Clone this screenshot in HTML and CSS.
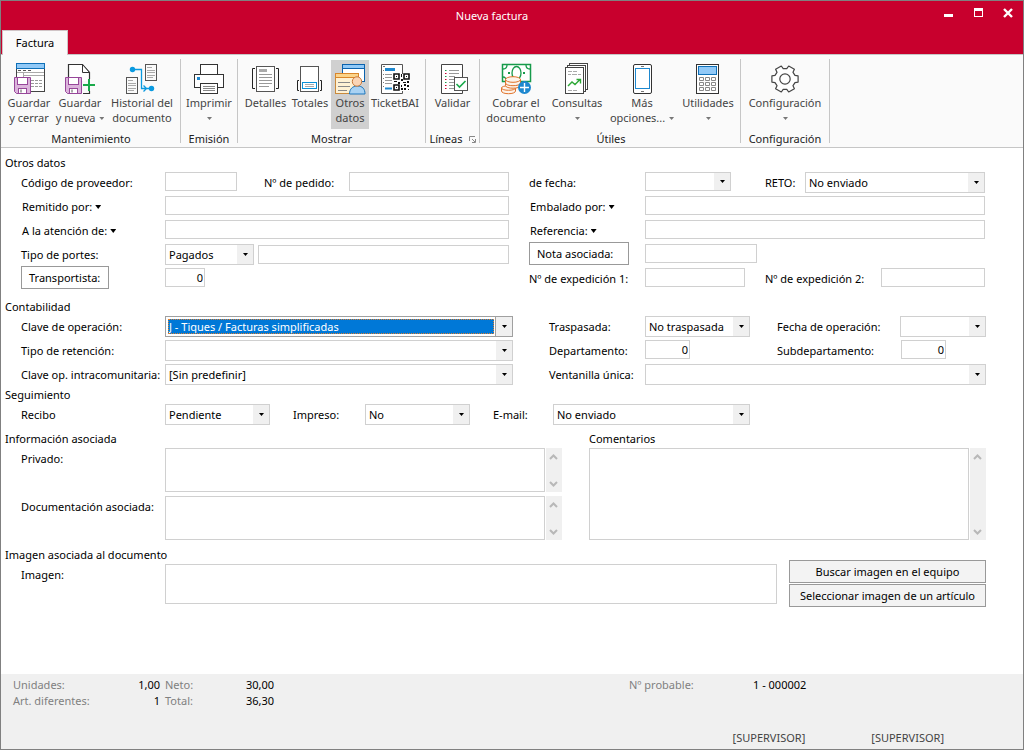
FILE: index.html
```html
<!DOCTYPE html>
<html lang="es">
<head>
<meta charset="utf-8">
<meta name="viewport" content="width=device-width, initial-scale=1">
<title>Nueva factura</title>
<link rel="stylesheet" href="styles.css">
</head>
<body>
<div class="window">
  <header class="titlebar">
    <h1 class="title">Nueva factura</h1>
    <div class="controls">
      <button class="control" type="button" aria-label="Minimizar"><svg width="10" height="10" viewBox="0 0 10 10"><rect x="1" y="6" width="9" height="3" fill="#fff"/></svg></button>
      <button class="control" type="button" aria-label="Maximizar"><svg width="10" height="10" viewBox="0 0 10 10"><path d="M1 0h9v9H1zM2 3v5h7V3z" fill="#fff" fill-rule="evenodd"/></svg></button>
      <button class="control" type="button" aria-label="Cerrar"><svg width="10" height="10" viewBox="0 0 10 10"><path d="M1 1l8 8M9 1l-8 8" stroke="#fff" stroke-width="2.4"/></svg></button>
    </div>
    <nav class="tabs"><button class="tab" type="button">Factura</button></nav>
  </header>

  <div class="ribbon">
    <section class="group">
      <div class="tools">
        <button class="tool w50" type="button">
          <svg class="icon" viewBox="0 0 32 34"><rect x="3.500" y="6.500" width="28" height="23" fill="#fff" stroke="#444"/><rect x="3.500" y="1.500" width="28" height="5" fill="#91c9f7" stroke="#0f70b8"/><path d="M5 8.500h3M10 8.500h3M15 8.500h3" stroke="#555"/><path d="M4 10.500h27M10.500 11v5M11 13.500h20" stroke="#aaa"/><path d="M18 18.500h3M22 18.500h3M26 18.500h3M18 21.500h3M22 21.500h3M26 21.500h3M18 24.500h3M22 24.500h3M26 24.500h3" stroke="#999"/><path d="M1.500 15.500h16v16h-14l-2-2z" fill="#dcb4dc" stroke="#97479a"/><rect x="4.500" y="15.500" width="10" height="7" fill="#fff" stroke="#97479a"/><rect x="5.500" y="26.500" width="8" height="5" fill="#fff" stroke="#97479a"/><path d="M8 27.500v3" stroke="#555"/></svg>
          <span>Guardar</span><span>y cerrar</span>
        </button>
        <button class="tool w52" type="button">
          <svg class="icon" viewBox="0 0 32 34"><path d="M5 3h13v7h7v9h-7v12H5z" fill="#fff"/><path d="M4.500 15V2.500h14l7 8V17M25.500 29v2.500H19" fill="none" stroke="#333" stroke-width="1.200"/><path d="M18.500 2.500v8h7z" fill="#fff" stroke="#333"/><path d="M1.500 15.500h16v16h-14l-2-2z" fill="#dcb4dc" stroke="#97479a"/><rect x="4.500" y="15.500" width="10" height="7" fill="#fff" stroke="#97479a"/><rect x="5.500" y="26.500" width="8" height="5" fill="#fff" stroke="#97479a"/><path d="M8 27.500v3" stroke="#555"/><path d="M25 17v12M19 23h12" stroke="#1aaa4b" stroke-width="2"/></svg>
          <span>Guardar</span><span>y nueva <i class="drop"></i></span>
        </button>
        <button class="tool w72" type="button">
          <svg class="icon" viewBox="0 0 32 34"><g fill="#fafafa" stroke="#555"><rect x="19.500" y="2.500" width="11" height="16"/><rect x=".5" y="15.500" width="11" height="16"/></g><path d="M21 5.500h5M21 8.500h8M21 10.500h8M21 13.500h8M21 15.500h6M2 18.500h5M2 21.500h8M2 23.500h8M2 26.500h8M2 28.500h6" stroke="#aaa"/><path d="M6 7.500h9.500v19h8M17.500 23.500l3 3-3 3" fill="none" stroke="#0a9ae0" stroke-width="1.300"/><circle cx="6.500" cy="7.500" r="2.700" fill="#0a9ae0"/><circle cx="25.500" cy="26.500" r="2.700" fill="#0a9ae0"/></svg>
          <span>Historial del</span><span>documento</span>
        </button>
      </div>
      <h2 class="group-name">Mantenimiento</h2>
    </section>

    <section class="group">
      <div class="tools">
        <button class="tool w56" type="button">
          <svg class="icon" viewBox="0 0 32 34"><g fill="#fff" stroke="#333"><rect x="7.500" y="2.500" width="17" height="11"/><rect x="1.500" y="12.500" width="29" height="13"/><rect x="7.500" y="21.500" width="17" height="10"/></g><path d="M10 24.500h12M10 26.500h12M10 28.500h12" stroke="#888"/><rect x="4" y="15" width="3" height="3" fill="#1e88cf"/></svg>
          <span>Imprimir</span><span><i class="drop"></i></span>
        </button>
      </div>
      <h2 class="group-name">Emisión</h2>
    </section>

    <section class="group">
      <div class="tools">
        <button class="tool w47" type="button">
          <svg class="icon" viewBox="0 0 32 34"><rect x="6.500" y="4.500" width="18" height="25" fill="#fff" stroke="#555"/><path d="M5 6.500H2.500v20H5M26 6.500h2.500v20H26" fill="none" stroke="#222"/><rect x="9" y="7" width="8" height="3" fill="#aaa"/><path d="M9 12.500h13M9 15.500h13M9 18.500h13M9 21.500h13M9 24.500h10" stroke="#999"/></svg>
          <span>Detalles</span>
        </button>
        <button class="tool w42" type="button">
          <svg class="icon" viewBox="0 0 32 34"><rect x="6.500" y="4.500" width="18" height="25" fill="#fff" stroke="#555"/><path d="M5 18.500H3.500v10H5M26 18.500h1.500v10H26" fill="none" stroke="#222"/><rect x="8.500" y="20.500" width="14" height="6" fill="#fff" stroke="#0a90d8"/><path d="M11 22.500h9M11 24.500h9" stroke="#aaa"/></svg>
          <span>Totales</span>
        </button>
        <button class="tool w38 active" type="button" aria-pressed="true">
          <svg class="icon" viewBox="0 0 32 34"><rect x="8.500" y="2.500" width="22" height="17" fill="#fff" stroke="#0b62ad"/><rect x="8.500" y="2.500" width="22" height="4" fill="#91c9f7" stroke="#0b62ad"/><rect x="1.500" y="11.500" width="23" height="20" fill="#fef1d3" stroke="#c98a3c"/><rect x="1.500" y="11.500" width="23" height="4" fill="#fbd48a" stroke="#d9862b"/><path d="M4 20.500h12M4 24.500h12M4 28.500h9" stroke="#888"/><path d="M15.500 32c0-5 3-8 8-8s7.500 3 7.500 8z" fill="#a9d2f3" stroke="#1c77bd"/><circle cx="23" cy="19.500" r="4.700" fill="#fbd5b5" stroke="#c8793a"/></svg>
          <span>Otros</span><span>datos</span>
        </button>
        <button class="tool w52" type="button">
          <svg class="icon" viewBox="0 0 32 34"><path d="M23.500 12V2.500h-21v29h21V29" fill="#fff" stroke="#555"/><path d="M4 4.500h2M4 8.500h1M4 12.500h1M4 16.500h1M4 20.500h1M4 24.500h1" stroke="#777"/><rect x="6" y="6" width="10" height="3" fill="#1e88cf"/><path d="M6 12.500h7M6 15.500h7M6 18.500h7M6 21.500h7" stroke="#999"/><path d="M6 26.500h7" stroke="#1e88cf" stroke-width="2"/><rect x="14" y="12" width="17" height="17" fill="#fff"/><path d="M15 12h5v5h-5zM25 12h5v5h-5zM15 23h5v5h-5z" fill="#fff" stroke="#111" stroke-width="1.600"/><path d="M17 14h1v1h-1zM27 14h1v1h-1zM17 25h1v1h-1zM22 12h1v3h-1zM22 17h2v2h-2zM15 19h3v1h-3zM19 20h2v2h-2zM24 20h3v1h-3zM28 19h2v2h-2zM22 23h1v2h-1zM25 22h2v2h-2zM28 23h2v2h-2zM22 26h2v2h-2zM25 26h2v2h-2zM29 27h1v1h-1z" fill="#111"/></svg>
          <span>TicketBAI</span>
        </button>
      </div>
      <h2 class="group-name">Mostrar</h2>
    </section>

    <section class="group">
      <div class="tools">
        <button class="tool w53" type="button">
          <svg class="icon" viewBox="0 0 32 34"><path d="M25.500 15V2.500h-21v29h21V29" fill="#fff" stroke="#444"/><path d="M12 8.500h10M12 11.500h10M12 14.500h6M12 17.500h5M12 20.500h5M12 23.500h5M12 26.500h6" stroke="#999"/><path d="M8 8.500h1.500M8 14.500h1.500M8 20.500h1.500" stroke="#169a4a"/><path d="M8 11.500h1.500M8 17.500h1.500M8 23.500h1.500M8 26.500h1.500" stroke="#c8002d"/><rect x="17.500" y="15.500" width="13" height="13" fill="#fff" stroke="#555"/><path d="M19.500 22l3 3 6-6" fill="none" stroke="#1aaa4b" stroke-width="1.600"/></svg>
          <span>Validar</span>
        </button>
      </div>
      <h2 class="group-name">Líneas <svg class="launcher" width="7" height="7" viewBox="0 0 7 7"><path d="M.5 5V.5H6M3 3l3 3M6.500 3v3.500H3" fill="none" stroke="#888"/></svg></h2>
    </section>

    <section class="group">
      <div class="tools">
        <button class="tool w64" type="button">
          <svg class="icon" viewBox="0 0 32 34"><rect x="2.500" y="2.500" width="28" height="17" fill="#fff" stroke="#169a4a" stroke-width="1.500"/><path d="M3 7c3 0 4-2 4-4M30 7c-3 0-4-2-4-4M3 15c2 0 3 1 3 4" fill="none" stroke="#169a4a" stroke-width="1.300"/><ellipse cx="16.500" cy="11" rx="4.500" ry="6.500" fill="#fff" stroke="#169a4a" stroke-width="1.300"/><path d="M8 10h2v2H8zM23 10h2v2h-2z" fill="#169a4a"/><g fill="#fdf3ea" stroke="#e0722a"><path d="M1.500 26v3c0 3.600 14 3.600 14 0v-3z"/><path d="M1.500 26c0-3 14-3 14 0s-14 3-14 0z"/><path d="M5.500 21v2.500c0 3.600 15 3.600 15 0V21z"/><path d="M5.500 17.500V21c0 3.600 15 3.600 15 0v-3.500z"/><ellipse cx="13" cy="17.500" rx="7.500" ry="2.800"/></g><circle cx="24.500" cy="25.500" r="6.500" fill="#1e88cf"/><path d="M24.500 21v9M20 25.500h9" stroke="#fff" stroke-width="1.400"/></svg>
          <span>Cobrar el</span><span>documento</span>
        </button>
        <button class="tool w58" type="button">
          <svg class="icon" viewBox="0 0 32 34"><g fill="#fff" stroke="#444"><rect x="8.500" y="1.500" width="18" height="26"/><rect x="6.500" y="3.500" width="18" height="26"/><rect x="4.500" y="5.500" width="18" height="26"/></g><path d="M7 9.500h4M12 9.500h4M7 12.500h3M11 12.500h5M17 12.500h3M7 28.500h4M12 28.500h4" stroke="#aaa"/><path d="M7 24l4-4 3 2.500 5-5M15.500 17.500h4v4" fill="none" stroke="#2ea836" stroke-width="1.400"/></svg>
          <span>Consultas</span><span><i class="drop"></i></span>
        </button>
        <button class="tool w72" type="button">
          <svg class="icon" viewBox="0 0 32 34"><rect x="7.500" y="2.500" width="18" height="29" rx="1.500" fill="#fff" stroke="#333"/><rect x="9.500" y="6.500" width="14" height="20" fill="#fff" stroke="#1e88cf"/><path d="M15 4.500h3M15 29.500h3" stroke="#777"/></svg>
          <span>Más</span><span>opciones... <i class="drop"></i></span>
        </button>
        <button class="tool w60" type="button">
          <svg class="icon" viewBox="0 0 32 34"><rect x="4.500" y="2.500" width="22" height="29" fill="#fff" stroke="#333"/><rect x="6.500" y="4.500" width="18" height="8" fill="#91c9f7" stroke="#0f70b8"/><path d="M7.500 15.500h4v3h-4zM13.500 15.500h4v3h-4zM19.500 15.500h4v3h-4zM7.500 20.500h4v3h-4zM13.500 20.500h4v3h-4zM19.500 20.500h4v3h-4zM7.500 25.500h4v3h-4zM13.500 25.500h4v3h-4zM19.500 25.500h4v3h-4z" fill="none" stroke="#888"/></svg>
          <span>Utilidades</span><span><i class="drop"></i></span>
        </button>
      </div>
      <h2 class="group-name">Útiles</h2>
    </section>

    <section class="group">
      <div class="tools">
        <button class="tool w88" type="button">
          <svg class="icon" viewBox="0 0 32 34"><path d="M26 13.400l3.100.5v6.200l-3.100.5L24 23.700l1.400 3L19.700 30l-1.900-2.700h-3.600L12.300 30l-5.700-3.300 1.400-3-2-3.100-3.100-.5v-6.200l3.100-.5 2-3.100-1.400-3L12.300 4l1.900 2.700h3.600L19.700 4l5.700 3.300-1.400 3z" fill="#fff" stroke="#444" stroke-width="1.200" stroke-linejoin="round"/><circle cx="16" cy="17" r="5.200" fill="#fff" stroke="#444" stroke-width="1.200"/></svg>
          <span>Configuración</span><span><i class="drop"></i></span>
        </button>
      </div>
      <h2 class="group-name">Configuración</h2>
    </section>
  </div>

  <main class="form">
    <fieldset class="section section-gap">
      <legend>Otros datos</legend>
      <div class="row">
        <label for="proveedor">Código de proveedor:</label>
        <div class="cell"><input class="box f72" id="proveedor" type="text"><label class="l-pedido" for="pedido">Nº de pedido:</label><input class="box grow" id="pedido" type="text"></div>
        <label class="right" for="fecha">de fecha:</label>
        <div class="cell"><span class="combo f86 short"><select id="fecha"><option></option></select></span><label class="l-reto" for="reto">RETO:</label><span class="combo grow"><select id="reto"><option>No enviado</option></select></span></div>
      </div>
      <div class="row">
        <button class="menu" type="button" id="remitido-l">Remitido por:</button>
        <div class="cell"><input class="box grow" type="text" aria-labelledby="remitido-l"></div>
        <button class="menu right" type="button" id="embalado-l">Embalado por:</button>
        <div class="cell"><input class="box grow" type="text" aria-labelledby="embalado-l"></div>
      </div>
      <div class="row">
        <button class="menu" type="button" id="atencion-l">A la atención de:</button>
        <div class="cell"><input class="box grow" type="text" aria-labelledby="atencion-l"></div>
        <button class="menu right" type="button" id="referencia-l">Referencia:</button>
        <div class="cell"><input class="box grow" type="text" aria-labelledby="referencia-l"></div>
      </div>
      <div class="row">
        <label for="portes">Tipo de portes:</label>
        <div class="cell"><span class="combo f89"><select id="portes"><option>Pagados</option></select></span><input class="box grow portes-text" type="text" aria-label="Detalle de portes"></div>
        <button class="push right f100" type="button" id="nota-l">Nota asociada:</button>
        <div class="cell"><input class="box f112" type="text" aria-labelledby="nota-l"></div>
      </div>
      <div class="row">
        <button class="push f88" type="button" id="transportista-l">Transportista:</button>
        <div class="cell"><input class="box number f40" type="text" value="0" aria-labelledby="transportista-l"></div>
        <label class="right" for="exp1">Nº de expedición 1:</label>
        <div class="cell"><input class="box f100" id="exp1" type="text"><label class="l-exp2" for="exp2">Nº de expedición 2:</label><input class="box grow" id="exp2" type="text"></div>
      </div>
    </fieldset>

    <fieldset class="section">
      <legend>Contabilidad</legend>
      <div class="row accounts">
        <label for="clave">Clave de operación:</label>
        <div class="cell"><span class="combo grow focused"><select id="clave"><option>J - Tiques / Facturas simplificadas</option></select></span></div>
        <label class="right" for="traspasada">Traspasada:</label>
        <div class="cell"><span class="combo f105"><select id="traspasada"><option>No traspasada</option></select></span><label class="l-fop" for="fop">Fecha de operación:</label><span class="combo grow"><select id="fop"><option></option></select></span></div>
      </div>
      <div class="row accounts">
        <label for="retencion">Tipo de retención:</label>
        <div class="cell"><span class="combo grow"><select id="retencion"><option></option></select></span></div>
        <label class="right" for="depto">Departamento:</label>
        <div class="cell"><input class="box number f45" id="depto" type="text" value="0"><label class="l-sub" for="subdepto">Subdepartamento:</label><input class="box number f45" id="subdepto" type="text" value="0"></div>
      </div>
      <div class="row accounts">
        <label for="intra">Clave op. intracomunitaria:</label>
        <div class="cell"><span class="combo grow"><select id="intra"><option>[Sin predefinir]</option></select></span></div>
        <label class="right" for="ventanilla">Ventanilla única:</label>
        <div class="cell"><span class="combo grow"><select id="ventanilla"><option></option></select></span></div>
      </div>
    </fieldset>

    <fieldset class="section">
      <legend>Seguimiento</legend>
      <div class="row tracking">
        <label for="recibo">Recibo</label>
        <div class="cell"><span class="combo f105"><select id="recibo"><option>Pendiente</option></select></span><label class="l-track" for="impreso">Impreso:</label><span class="combo f105"><select id="impreso"><option>No</option></select></span><label class="l-mail" for="email">E-mail:</label><span class="combo f197"><select id="email"><option>No enviado</option></select></span></div>
      </div>
    </fieldset>

    <div class="notes">
      <fieldset class="section">
        <legend>Información asociada</legend>
        <div class="memo-row">
          <label for="privado">Privado:</label>
          <div class="memo"><textarea id="privado"></textarea><div class="scroll"><svg viewBox="0 0 9 6"><path d="M1 5l3.500-3.500L8 5"/></svg><svg viewBox="0 0 9 6"><path d="M1 1l3.500 3.500L8 1"/></svg></div></div>
        </div>
        <div class="memo-row">
          <label for="documentacion">Documentación asociada:</label>
          <div class="memo"><textarea id="documentacion"></textarea><div class="scroll"><svg viewBox="0 0 9 6"><path d="M1 5l3.500-3.500L8 5"/></svg><svg viewBox="0 0 9 6"><path d="M1 1l3.500 3.500L8 1"/></svg></div></div>
        </div>
      </fieldset>
      <div class="comments">
        <label for="comentarios">Comentarios</label>
        <div class="memo tall"><textarea id="comentarios"></textarea><div class="scroll"><svg viewBox="0 0 9 6"><path d="M1 5l3.500-3.500L8 5"/></svg><svg viewBox="0 0 9 6"><path d="M1 1l3.500 3.500L8 1"/></svg></div></div>
      </div>
    </div>

    <div class="image-area">
      <fieldset class="section">
        <legend>Imagen asociada al documento</legend>
        <div class="memo-row">
          <label for="imagen">Imagen:</label>
          <div class="memo picture"><textarea id="imagen"></textarea></div>
        </div>
      </fieldset>
      <div class="image-actions">
        <button class="push gray" type="button">Buscar imagen en el equipo</button>
        <button class="push gray" type="button">Seleccionar imagen de un artículo</button>
      </div>
    </div>
  </main>

  <footer class="footer">
    <dl class="totals">
      <dt>Unidades:</dt><dd class="num">1,00</dd><dt>Neto:</dt><dd class="num">30,00</dd><dt class="probable">Nº probable:</dt><dd>1 - 000002</dd>
      <dt>Art. diferentes:</dt><dd class="num">1</dd><dt>Total:</dt><dd class="num">36,30</dd>
    </dl>
    <div class="status"><span>[SUPERVISOR]</span><span>[SUPERVISOR]</span></div>
  </footer>
</div>
</body>
</html>
```
FILE: styles.css
```css
* { box-sizing: border-box; }

body {
  margin: 0;
  background: #fff;
  color: #000;
  font: 11px/16px "Noto Sans", "Open Sans", sans-serif;
}

button, input, select, textarea {
  margin: 0;
  padding: 0;
  border: 0;
  border-radius: 0;
  outline: 0;
  background: none;
  color: inherit;
  font: inherit;
}

.window {
  display: flex;
  flex-direction: column;
  min-height: 100vh;
  border: 1px solid #808080;
}

/* Title bar */
.titlebar {
  display: grid;
  grid-template-columns: 80px 1fr 80px;
  grid-template-rows: 29px 25px;
  background: #c8002d;
  color: #fff;
}
.title {
  grid-column: 2;
  margin: 0;
  padding-right: 40px;
  font-size: 11px;
  font-weight: 400;
  line-height: 30px;
  text-align: center;
}
.controls {
  display: flex;
  justify-content: flex-end;
  gap: 20px;
  padding: 7px 10px 0 0;
}
.control { width: 10px; height: 10px; line-height: 0; }
.tabs { grid-column: 1 / -1; padding-left: 1px; border-bottom: 1px solid #c6c6c6; }
.tab {
  height: 25px;
  width: 66px;
  border: 1px solid #d0c4c6;
  border-bottom: 0;
  background: #fafafa;
  color: #000;
}

/* Ribbon */
.ribbon {
  display: flex;
  padding: 4px 0;
  border-bottom: 1px solid #c6c6c6;
  background: #fafafa;
}
.group {
  display: flex;
  flex-direction: column;
  align-items: center;
  height: 84px;
  padding: 1px 2px 0;
  border-right: 1px solid #c6c6c6;
}
.group:nth-child(1) { padding: 1px 2px 0 3px; }
.group:nth-child(2), .group:nth-child(4), .group:nth-child(6) { padding: 1px 0 0; }
.group:nth-child(3) { padding: 1px 4px 0; }
.group:nth-child(5) { padding: 1px 2px 0 4px; }
.tools { display: flex; }
.tool {
  display: flex;
  flex-direction: column;
  align-items: center;
  height: 69px;
  padding-top: 2px;
  color: #444;
  line-height: 15px;
  white-space: nowrap;
}
.tool.active { background: #d0d0d0; }
.icon { flex: none; width: 32px; height: 34px; margin-bottom: -1px; }
.drop {
  display: inline-block;
  width: 5px;
  height: 3px;
  margin-left: 1px;
  background: #777;
  clip-path: polygon(0 0, 100% 0, 50% 100%);
  vertical-align: 2px;
}
.group-name {
  display: flex;
  align-items: center;
  gap: 6px;
  margin: 2px 0 0;
  color: #222;
  font-size: 11px;
  font-weight: 400;
  line-height: 16px;
}
.w38 { width: 38px; }
.w42 { width: 42px; }
.w47 { width: 47px; }
.w50 { width: 50px; }
.w52 { width: 52px; }
.w53 { width: 53px; }
.w56 { width: 56px; }
.w58 { width: 58px; }
.w60 { width: 60px; }
.w64 { width: 64px; }
.w72 { width: 72px; }
.w88 { width: 88px; }

/* Form */
.form { flex: 1; padding: 7px 37px 0 4px; }
.section { min-width: 0; margin: 0; padding: 0; border: 0; }
.section-gap { margin-bottom: 8px; }
.section-gap .row { padding-right: 1px; }
.section legend { display: block; padding: 0; }
.row {
  display: grid;
  grid-template-columns: 144px minmax(0, 344fr) 136px minmax(0, 340fr);
  height: 24px;
  padding-left: 16px;
  line-height: 24px;
  white-space: nowrap;
}
.row.accounts { grid-template-columns: 144px minmax(0, 348fr) 132px minmax(0, 341fr); }
.row.tracking { grid-template-columns: 144px minmax(0, 1fr); }
.row > .right { margin-left: 20px; }
.accounts > .right { margin-left: 36px; }
.cell { display: flex; min-width: 0; }
.grow { flex: 1; min-width: 0; }

.box {
  height: 19px;
  margin-top: 1px;
  border: 1px solid #d0d0d0;
  background: #fff;
}
.number { padding-right: 1px; text-align: right; }
.portes-text { margin-top: 2px; margin-left: 4px; }

.combo {
  position: relative;
  display: block;
  height: 21px;
  margin-top: 1px;
  border: 1px solid #d0d0d0;
}
.combo.short { height: 19px; }
.combo select {
  display: block;
  width: 100%;
  height: 100%;
  padding: 0 19px 0 3px;
  appearance: none;
  background: linear-gradient(#f0f0f0, #f0f0f0) right / 16px 100% no-repeat;
  line-height: 19px;
}
.combo::after {
  content: "";
  position: absolute;
  top: 8px;
  right: 5px;
  width: 5px;
  height: 3px;
  background: #000;
  clip-path: polygon(0 0, 100% 0, 50% 100%);
  pointer-events: none;
}
.combo.short::after { top: 7px; }
.combo.focused { padding: 2px 18px 2px 2px; border-color: #a0a0a0; }
.combo.focused::before {
  content: "";
  position: absolute;
  inset: 0 0 0 auto;
  width: 16px;
  border-left: 1px solid #a0a0a0;
  background: #f0f0f0;
}
.combo.focused select {
  padding: 0;
  border: 1px dotted #e08030;
  background: #0078d7;
  color: #fff;
  line-height: 13px;
}

.menu { display: flex; align-items: center; gap: 3px; padding-left: 1px; line-height: 22px; }
.menu::after {
  content: "";
  width: 6px;
  height: 4px;
  background: #000;
  clip-path: polygon(0 0, 100% 0, 50% 100%);
}
.push {
  height: 23px;
  border: 1px solid #999;
  background: #fff;
  line-height: 21px;
}
.row .push { margin-top: -1px; padding-left: 7px; text-align: left; }
.push.gray { background: #f3f3f3; }

.f40 { width: 40px; }
.f45 { width: 45px; }
.f72 { width: 72px; }
.f86 { width: 86px; }
.f88 { width: 88px; }
.f89 { width: 89px; }
.f100 { width: 100px; }
.f105 { width: 105px; }
.f112 { width: 112px; }
.f197 { width: 197px; }

.l-pedido { width: 112px; padding-left: 27px; }
.l-reto { width: 74px; padding-left: 34px; }
.l-exp2 { width: 136px; padding-left: 20px; }
.l-fop { width: 150px; padding-left: 27px; }
.l-sub { width: 211px; padding-left: 87px; }
.l-track { width: 95px; padding-left: 23px; }
.l-mail { width: 83px; padding-left: 23px; }

/* Memo fields */
.notes {
  display: grid;
  grid-template-columns: minmax(0, 557fr) minmax(0, 397fr);
  gap: 27px;
  margin-top: 4px;
}
.memo-row {
  display: grid;
  grid-template-columns: 144px minmax(0, 1fr);
  height: 48px;
  padding-left: 16px;
  line-height: 24px;
  white-space: nowrap;
}
.memo { display: flex; gap: 1px; height: 44px; margin-top: 1px; }
.memo.tall { height: 92px; }
.memo.picture { height: 40px; }
.memo textarea {
  flex: 1;
  min-width: 0;
  height: 100%;
  border: 1px solid #d0d0d0;
  background: #fff;
  resize: none;
}
.scroll {
  display: flex;
  flex-direction: column;
  align-items: center;
  justify-content: space-between;
  width: 16px;
  padding: 6px 1px 5px 0;
  background: #f0f0f0;
}
.scroll svg { width: 9px; height: 6px; fill: none; stroke: #b8b8b8; stroke-width: 2; }
.comments { display: flex; flex-direction: column; }

.image-area {
  display: grid;
  grid-template-columns: minmax(0, 1fr) 197px;
  gap: 12px;
  margin-top: 4px;
}
.image-actions { display: flex; flex-direction: column; gap: 1px; padding-top: 13px; }

/* Footer */
.footer {
  display: flex;
  flex-direction: column;
  justify-content: space-between;
  min-height: 75px;
  padding: 3px 79px 3px 12px;
  background: #f0f0f0;
}
.totals {
  display: grid;
  grid-template-columns: 107px 40px 40px 74px 1fr 191px;
  margin: 0;
}
.totals dt { color: #808080; }
.totals dt:nth-of-type(3n + 2) { padding-left: 5px; }
.totals dd { margin: 0; }
.num { text-align: right; }
.totals .probable { justify-self: end; width: 124px; }
.status { display: flex; justify-content: flex-end; gap: 66px; color: #444; }
```
